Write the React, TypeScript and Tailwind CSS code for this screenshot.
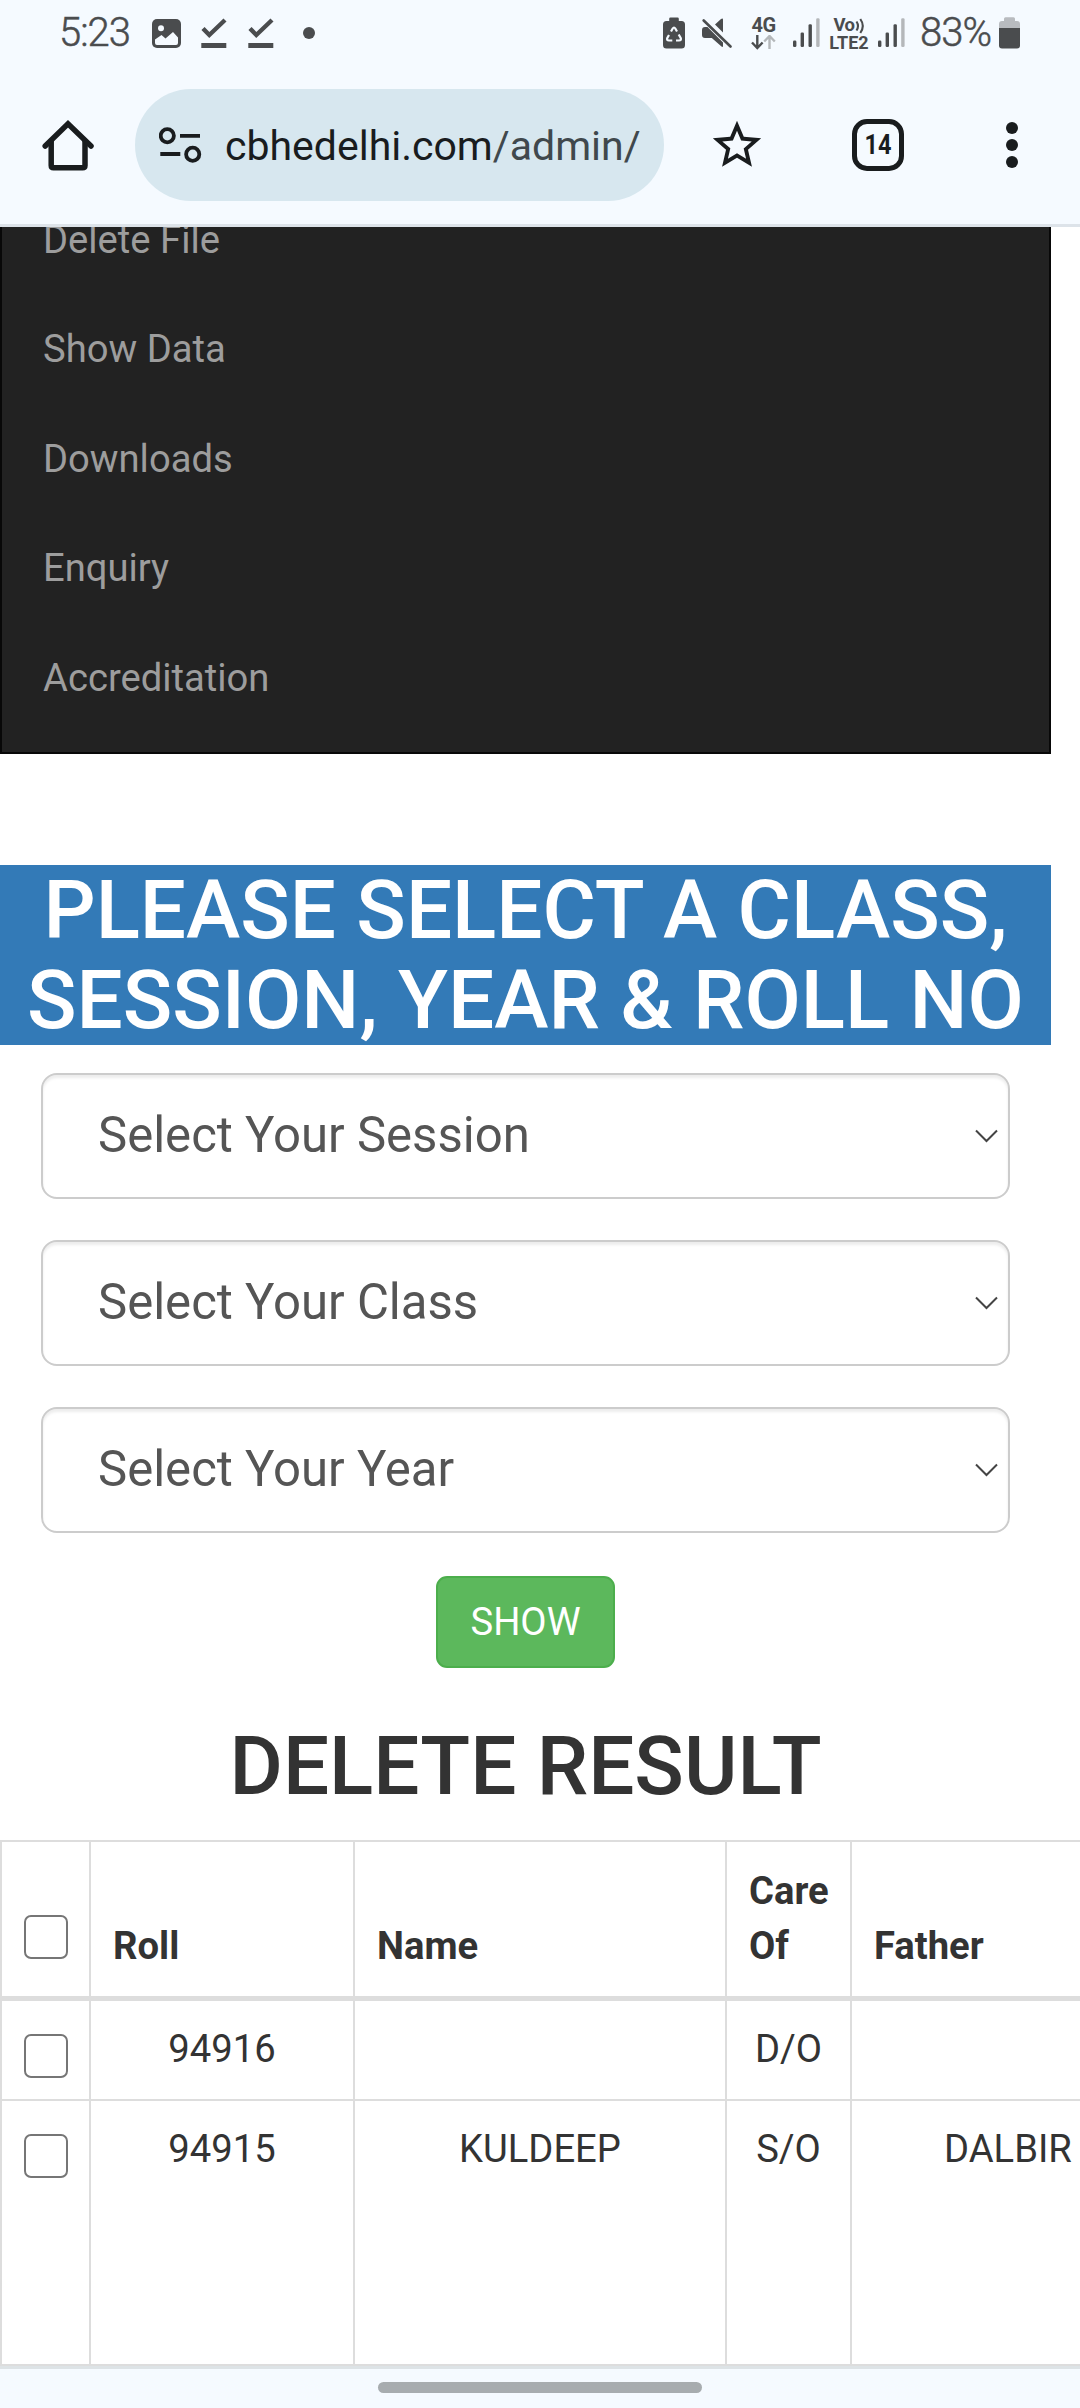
// App.tsx
import type { ReactNode } from "react";

const NAV_ITEMS = ["Delete File", "Show Data", "Downloads", "Enquiry", "Accreditation"];

const SELECTS = ["Select Your Session", "Select Your Class", "Select Your Year"];

const ROWS = [
  { roll: "94916", name: "", careOf: "D/O", father: "" },
  { roll: "94915", name: "KULDEEP", careOf: "S/O", father: "DALBIR" },
];

/* ---------- status bar ---------- */

function ImageIcon() {
  return (
    <svg className="shrink-0" width="29" height="36" viewBox="0 0 29 36">
      <rect x="0" y="4" width="29" height="29" rx="5" fill="#4a4c4e" />
      <circle cx="9" cy="13.3" r="3" fill="#f5faff" />
      <path d="M3 24.5 9.5 20l4 3.5L21 17l5 5.5V28q0 2-2 2H5q-2 0-2-2z" fill="#f5faff" />
    </svg>
  );
}

function DoneIcon() {
  return (
    <svg className="shrink-0" width="26" height="36" viewBox="0 0 26 36">
      <path d="M2 13.5 8.3 20 24 5" fill="none" stroke="#4a4c4e" strokeWidth="4.4" />
      <rect x="0.3" y="28" width="25" height="5" fill="#4a4c4e" />
    </svg>
  );
}

function RecycleBattery() {
  return (
    <svg className="shrink-0" width="22" height="36" viewBox="0 0 22 36">
      <path d="M7.5 2.5h7q1.3 0 1.3 1.3V6h2.7Q22 6 22 9.5V30q0 3.5-3.5 3.5h-15Q0 33.5 0 30V9.5Q0 6 3.5 6h2.7V3.8q0-1.3 1.3-1.3z" fill="#4a4c4e" />
      <path
        d="M8 16.5l1.7-3q1.3-2 2.6 0l1.7 3M15.7 19.5l2 3.5q1 2.5-1.7 2.5h-3M9.3 25.5H6q-2.7 0-1.7-2.5l1.7-3"
        fill="none" stroke="#f5faff" strokeWidth="2.2"
      />
    </svg>
  );
}

function MuteIcon() {
  return (
    <svg className="shrink-0" width="31" height="36" viewBox="0 0 31 36">
      <path d="M14 9.5 20 4q2-1.5 2 .7V17.5zM6.5 12 22 27.5V31q0 1.5-1.5.5L10.8 23H4q-3 0-3-3v-5q0-3 3-3z" fill="#4a4c4e" />
      <path d="M2.7 5.5 29.5 31.5" stroke="#4a4c4e" strokeWidth="2.6" strokeLinecap="round" />
    </svg>
  );
}

function SignalBars() {
  return (
    <svg className="shrink-0" width="27" height="36" viewBox="0 0 27 36">
      <rect x="0" y="25.5" width="3.4" height="6.5" rx="1.3" fill="#4a4c4e" />
      <rect x="7.6" y="17.5" width="3.4" height="14.5" rx="1.3" fill="#4a4c4e" />
      <rect x="15.5" y="9.3" width="3.4" height="22.7" rx="1.3" fill="#4a4c4e" />
      <rect x="23.2" y="3.3" width="3.4" height="28.7" rx="1.3" fill="#b4b7ba" />
    </svg>
  );
}

function StatusBar() {
  return (
    <div className="flex h-[66px] items-center justify-between pr-[60px] pl-[59px] text-[#4a4c4e]">
      <div className="flex items-center">
        <span className="w-[93px] text-[40px] leading-none font-light tracking-[-1px] [-webkit-text-stroke:0.5px_#4a4c4e]">5:23</span>
        <ImageIcon />
        <div className="ml-[20px] flex gap-[21px]">
          <DoneIcon />
          <DoneIcon />
        </div>
        <div className="ml-[29px] h-3 w-3 rounded-full bg-[#4a4c4e]" />
      </div>

      <div className="flex items-center">
        <RecycleBattery />
        <div className="ml-[16px]"><MuteIcon /></div>
        <div className="ml-[18px] flex h-[36px] w-[27px] flex-col items-center pt-[2px]">
          <span className="text-[20px] leading-[17px] font-bold tracking-[-0.5px]">4G</span>
          <svg className="mt-[1px]" width="25" height="15" viewBox="0 0 25 15" fill="none" strokeWidth="2.4">
            <path d="M6.3 0v13M1 7.5l5.3 5.5 5.3-5.5" stroke="#4a4c4e" />
            <path d="M18.5 14V1M13.2 6.5 18.5 1l5.3 5.5" stroke="#b4b7ba" />
          </svg>
        </div>
        <div className="ml-[16px]"><SignalBars /></div>
        <div className="ml-[8px] flex h-[36px] w-[42px] flex-col items-center pt-[2px] leading-[17px] font-bold">
          <span className="flex items-center text-[18.5px] tracking-[-0.5px]">
            Vo
            <svg width="10" height="16" viewBox="0 0 9 16" fill="none" stroke="#4a4c4e" strokeWidth="2.1">
              <path d="M1 3.5q3 4.5 0 9M4.8 1q5 7 0 14" />
            </svg>
          </span>
          <span className="text-[18px]">LTE2</span>
        </div>
        <div className="ml-[8px]"><SignalBars /></div>
        <span className="ml-[15px] w-[79px] text-[40px] leading-none font-light tracking-[-1px] [-webkit-text-stroke:0.5px_#4a4c4e]">83%</span>
        <svg className="shrink-0" width="21" height="36" viewBox="0 0 21 36">
          <path d="M6.5 2.3h8q1.5 0 1.5 1.5V6h2q3 0 3 3v4H0V9q0-3 3-3h2V3.8q0-1.5 1.5-1.5z" fill="#b8bbbf" />
          <path d="M0 13h21v17.5q0 3-3 3H3q-3 0-3-3z" fill="#4a4c4e" />
        </svg>
      </div>
    </div>
  );
}

/* ---------- browser toolbar ---------- */

function Toolbar() {
  return (
    <div className="flex h-[158px] items-center pl-[42px] text-[#191c1e]">
      <svg className="shrink-0" width="52" height="52" viewBox="0 0 52 52" fill="none" stroke="#191c1e" strokeWidth="5.5">
        <path d="M9.2 22v24.5q0 2.3 2.3 2.3h29.2q2.3 0 2.3-2.3V22" />
        <path d="M3.2 27 26 4.8 49 27" strokeLinecap="round" />
      </svg>

      <div className="ml-[41px] flex h-[112px] w-[529px] items-center rounded-full bg-[#d7e7ef] pl-[24px]">
        <svg className="shrink-0" width="43" height="38" viewBox="0 0 43 38" fill="none" stroke="#191c1e" strokeWidth="3.8">
          <circle cx="8.3" cy="9.7" r="6.6" />
          <path d="M21 9.9h20M1.3 28h20" />
          <circle cx="33.7" cy="28.3" r="6.6" />
        </svg>
        <span className="ml-[23px] translate-y-[0.5px] text-[41px] leading-none whitespace-nowrap">
          cbhedelhi.com<span className="text-[#40484c]">/admin/</span>
        </span>
      </div>

      <svg className="ml-[44px] shrink-0" width="58" height="58" viewBox="0 0 24 24" fill="#191c1e">
        <path d="M22 9.24l-7.19-.62L12 2 9.19 8.63 2 9.24l5.46 4.73L5.82 21 12 17.27 18.18 21l-1.63-7.03L22 9.24zM12 15.4l-3.76 2.27 1-4.28-3.32-2.88 4.38-.38L12 6.1l1.71 4.04 4.38.38-3.32 2.88 1 4.28L12 15.4z" />
      </svg>

      <div className="ml-[86px] flex h-[52px] w-[52px] shrink-0 items-center justify-center rounded-[15px] border-[5.5px] border-[#191c1e]">
        <span className="scale-x-[0.84] text-[28px] leading-none font-bold">14</span>
      </div>

      <div className="ml-[102px] flex flex-col gap-[5px]">
        <div className="h-3 w-3 rounded-full bg-[#191c1e]" />
        <div className="h-3 w-3 rounded-full bg-[#191c1e]" />
        <div className="h-3 w-3 rounded-full bg-[#191c1e]" />
      </div>
    </div>
  );
}

/* ---------- page ---------- */

function NavMenu() {
  return (
    <nav className="h-[527px] w-[1051px] overflow-hidden border-x-2 border-b-2 border-[#080808] bg-[#222]">
      <ul className="-mt-[41.5px] pl-[41px] text-[38.2px] leading-[109.5px] text-[#9d9d9d]">
        {NAV_ITEMS.map((item) => (
          <li key={item}>{item}</li>
        ))}
      </ul>
    </nav>
  );
}

function SelectBox({ label }: { label: string }) {
  return (
    <div className="flex h-[126px] w-[969px] items-center justify-between rounded-[16px] border-2 border-[#ccc] bg-white pr-[10px] pl-[55px] text-[49.1px] text-[#555] shadow-[inset_0_3px_3px_rgba(0,0,0,0.075)]">
      <span className="leading-none">{label}</span>
      <svg width="23" height="14" viewBox="0 0 23 14" fill="none" stroke="#444" strokeWidth="2">
        <path d="M1 1.5 11.5 12 22 1.5" />
      </svg>
    </div>
  );
}

function Checkbox() {
  return <div className="ml-[22px] h-[44px] w-[44px] rounded-[7px] border-[2.7px] border-[#767676] bg-white" />;
}

function Th({ children }: { children: ReactNode }) {
  return (
    <th className="border-t-2 border-r-2 border-b-[5px] border-[#ddd] pb-[22px] pl-[22px] text-left align-bottom font-bold">
      {children}
    </th>
  );
}

function Td({ children }: { children: ReactNode }) {
  return <td className="border-r-2 border-b-2 border-[#ddd] pt-[21px] text-center align-top">{children}</td>;
}

function ResultTable() {
  return (
    <table className="w-[1300px] table-fixed border-separate border-spacing-0 text-[38.2px] leading-[55px] text-[#333]">
      <colgroup>
        <col className="w-[91px]" />
        <col className="w-[264px]" />
        <col className="w-[372px]" />
        <col className="w-[125px]" />
        <col />
      </colgroup>
      <thead>
        <tr className="h-[161px]">
          <th className="border-x-2 border-t-2 border-b-[5px] border-[#ddd] pb-[37px] align-bottom">
            <Checkbox />
          </th>
          <Th>Roll</Th>
          <Th>Name</Th>
          <Th>Care Of</Th>
          <Th>Father</Th>
        </tr>
      </thead>
      <tbody>
        {ROWS.map((r, i) => (
          <tr key={r.roll} className={i === 0 ? "h-[100px]" : "h-[265px]"}>
            <td className="border-x-2 border-b-2 border-[#ddd] pt-[33px] align-top">
              <Checkbox />
            </td>
            <Td>{r.roll}</Td>
            <Td>{r.name}</Td>
            <Td>{r.careOf}</Td>
            <td className="border-b-2 border-[#ddd] pt-[21px] pl-[92px] align-top">{r.father}</td>
          </tr>
        ))}
      </tbody>
    </table>
  );
}

export default function App() {
  return (
    <div className="flex h-[2408px] w-[1080px] flex-col overflow-hidden bg-white font-[Roboto,sans-serif]">
      <header className="shrink-0 border-b-[3px] border-[#dde3e9] bg-[#f5faff]">
        <StatusBar />
        <Toolbar />
      </header>

      <main className="h-[2139px] shrink-0 overflow-hidden">
        <NavMenu />

        <h1 className="mt-[111px] w-[1051px] bg-[#337ab7] text-center text-[81.8px] leading-[90px] font-medium text-white">
          PLEASE SELECT A CLASS, SESSION, YEAR &amp; ROLL NO
        </h1>

        <div className="mt-[28px] ml-[41px] flex flex-col gap-[41px]">
          {SELECTS.map((label) => (
            <SelectBox key={label} label={label} />
          ))}
        </div>

        <div className="mt-[43px] flex w-[1051px] justify-center">
          <button className="h-[92px] w-[179px] rounded-[11px] border-[2.7px] border-[#4cae4c] bg-[#5cb85c] text-[38.2px] leading-none text-white">
            SHOW
          </button>
        </div>

        <h1 className="mt-[53px] mb-[29px] w-[1051px] text-center text-[81.8px] leading-[90px] font-medium text-[#333]">
          DELETE RESULT
        </h1>

        <ResultTable />
      </main>

      {/* gesture bar */}
      <footer className="flex grow justify-center border-t-[3px] border-[#dde3e6] bg-[#f5faff] pt-[13px]">
        <div className="h-[11px] w-[324px] rounded-full bg-[#a7acaf]" />
      </footer>
    </div>
  );
}
